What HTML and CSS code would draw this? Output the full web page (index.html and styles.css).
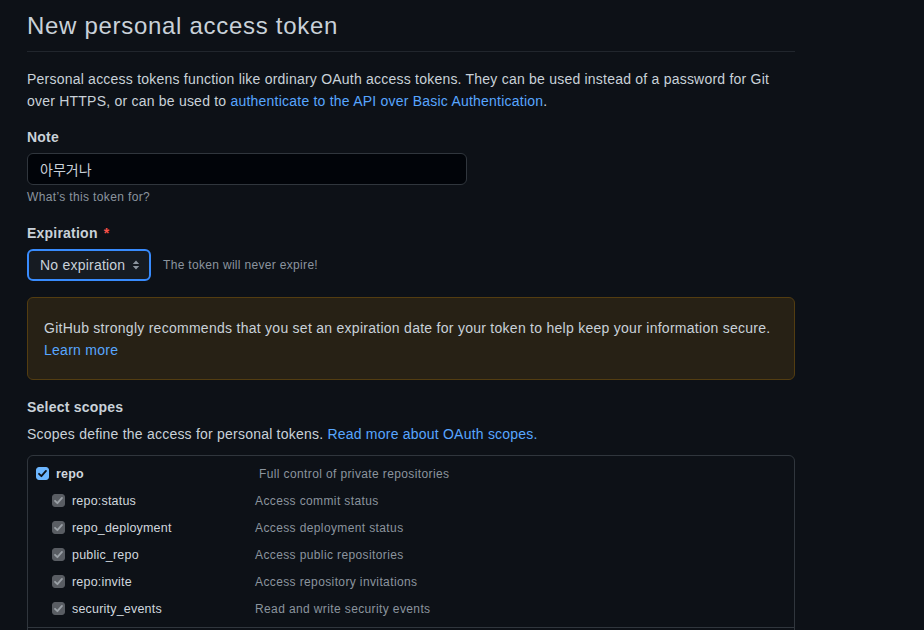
FILE: index.html
```html
<!DOCTYPE html>
<html lang="en">
<head>
<meta charset="utf-8">
<title>New personal access token</title>
<link rel="stylesheet" href="styles.css">
</head>
<body>
<div class="main">
  <h2 class="title">New personal access token</h2>
  <p class="intro">Personal access tokens function like ordinary OAuth access tokens. They can be used instead of a password for Git over HTTPS, or can be used to <a href="#">authenticate to the API over Basic Authentication</a>.</p>

  <div class="field">
    <label class="label">Note</label>
    <div class="input">아무거나</div>
    <div class="hint">What’s this token for?</div>
  </div>

  <div class="field">
    <label class="label">Expiration <span class="req">*</span></label>
    <div class="select-row">
      <div class="select">
        <span>No expiration</span>
        <svg class="arrows" width="8" height="12" viewBox="0 0 8 12"><path d="M4 1.5 L7.2 5 H0.8 Z M4 10.5 L0.8 7 H7.2 Z" fill="#8b949e"/></svg>
      </div>
      <span class="select-note">The token will never expire!</span>
    </div>
  </div>

  <div class="flash">GitHub strongly recommends that you set an expiration date for your token to help keep your information secure.<br><a href="#">Learn more</a></div>

  <div class="label scopes-title">Select scopes</div>
  <p class="scopes-desc">Scopes define the access for personal tokens. <a href="#">Read more about OAuth scopes.</a></p>

  <div class="scopes">
    <div class="group">
      <div class="row parent">
        <div class="name">
          <span class="cb cb-on"><svg width="11" height="11" viewBox="0 0 12 12"><path d="M2.2 6.3 L4.8 8.9 L9.8 3.2" fill="none" stroke="#0d1117" stroke-width="2" stroke-linecap="round" stroke-linejoin="round"/></svg></span>
          <span class="scope-label">repo</span>
        </div>
        <span class="desc">Full control of private repositories</span>
      </div>
      <div class="row child">
        <div class="name"><span class="cb cb-dis"><svg width="11" height="11" viewBox="0 0 12 12"><path d="M2.2 6.3 L4.8 8.9 L9.8 3.2" fill="none" stroke="#9aa0a6" stroke-width="2" stroke-linecap="round" stroke-linejoin="round"/></svg></span><span class="scope-label">repo:status</span></div>
        <span class="desc">Access commit status</span>
      </div>
      <div class="row child">
        <div class="name"><span class="cb cb-dis"><svg width="11" height="11" viewBox="0 0 12 12"><path d="M2.2 6.3 L4.8 8.9 L9.8 3.2" fill="none" stroke="#9aa0a6" stroke-width="2" stroke-linecap="round" stroke-linejoin="round"/></svg></span><span class="scope-label">repo_deployment</span></div>
        <span class="desc">Access deployment status</span>
      </div>
      <div class="row child">
        <div class="name"><span class="cb cb-dis"><svg width="11" height="11" viewBox="0 0 12 12"><path d="M2.2 6.3 L4.8 8.9 L9.8 3.2" fill="none" stroke="#9aa0a6" stroke-width="2" stroke-linecap="round" stroke-linejoin="round"/></svg></span><span class="scope-label">public_repo</span></div>
        <span class="desc">Access public repositories</span>
      </div>
      <div class="row child">
        <div class="name"><span class="cb cb-dis"><svg width="11" height="11" viewBox="0 0 12 12"><path d="M2.2 6.3 L4.8 8.9 L9.8 3.2" fill="none" stroke="#9aa0a6" stroke-width="2" stroke-linecap="round" stroke-linejoin="round"/></svg></span><span class="scope-label">repo:invite</span></div>
        <span class="desc">Access repository invitations</span>
      </div>
      <div class="row child">
        <div class="name"><span class="cb cb-dis"><svg width="11" height="11" viewBox="0 0 12 12"><path d="M2.2 6.3 L4.8 8.9 L9.8 3.2" fill="none" stroke="#9aa0a6" stroke-width="2" stroke-linecap="round" stroke-linejoin="round"/></svg></span><span class="scope-label">security_events</span></div>
        <span class="desc">Read and write security events</span>
      </div>
    </div>
    <div class="group next"></div>
  </div>
</div>
</body>
</html>
```

FILE: styles.css
```css
html, body {
  margin: 0;
  padding: 0;
  background: #0d1117;
  height: 630px;
  overflow: hidden;
}
body {
  font-family: "Liberation Sans", Arial, "Noto Sans CJK KR", sans-serif;
  color: #c9d1d9;
  font-size: 14px;
  letter-spacing: 0.22px;
}
a {
  color: #58a6ff;
  text-decoration: none;
}
.main {
  width: 768px;
  padding: 11px 27px 0;
}
.title {
  margin: 0;
  font-size: 24px;
  font-weight: 400;
  line-height: 30px;
  letter-spacing: 0.7px;
  padding-bottom: 10px;
  border-bottom: 1px solid #21262d;
}
.intro {
  margin: 16px 0 0;
  line-height: 22px;
}
.field {
  margin-top: 14px;
}
.field + .field {
  margin-top: 16px;
}
.label {
  display: block;
  font-weight: 700;
  line-height: 22px;
}
.req {
  color: #f85149;
  margin-left: 2px;
}
.input {
  margin-top: 5px;
  width: 440px;
  height: 32px;
  box-sizing: border-box;
  border: 1px solid #30363d;
  border-radius: 6px;
  background: #010409;
  padding: 0 12px;
  display: flex;
  align-items: center;
  font-family: "Liberation Sans", "Noto Sans CJK KR", sans-serif;
  letter-spacing: 0;
}
.hint {
  margin-top: 3px;
  font-size: 12px;
  line-height: 18px;
  letter-spacing: 0.36px;
  color: #8b949e;
}
.select-row {
  margin-top: 5px;
  display: flex;
  align-items: center;
  gap: 12px;
}
.select {
  width: 124px;
  height: 32px;
  box-sizing: border-box;
  border: 2px solid #388bfd;
  border-radius: 6px;
  background: #161b22;
  padding: 0 9px 0 11px;
  display: flex;
  align-items: center;
  justify-content: space-between;
}
.select-note {
  font-size: 12px;
  letter-spacing: 0.32px;
  color: #8b949e;
}
.flash {
  margin-top: 16px;
  background: #272115;
  border: 1px solid #533d11;
  border-radius: 6px;
  padding: 19px 16px 18px;
  line-height: 22px;
  letter-spacing: 0.27px;
}
.scopes-title {
  margin-top: 16px;
}
.scopes-desc {
  margin: 5px 0 0;
  line-height: 22px;
}
.scopes {
  margin-top: 10px;
  border: 1px solid #30363d;
  border-radius: 6px;
}
.group {
  padding: 4px 0 5px;
}
.group.next {
  border-top: 1px solid #30363d;
  height: 20px;
}
.row {
  display: flex;
  align-items: center;
  height: 27px;
  font-size: 12px;
  letter-spacing: 0.38px;
}
.scope-label {
  font-size: 12.5px;
  letter-spacing: 0.2px;
  color: #d0d7de;
}
.name {
  display: flex;
  align-items: center;
  gap: 7px;
}
.parent {
  padding-left: 8px;
}
.parent .name {
  width: 223px;
}
.parent .scope-label {
  font-weight: 700;
}
.child {
  padding-left: 24px;
}
.child .name {
  width: 203px;
}
.cb {
  width: 13px;
  height: 13px;
  box-sizing: border-box;
  border-radius: 3px;
  border: 1px solid #6e7681;
  display: flex;
  align-items: center;
  justify-content: center;
  flex: none;
}
.cb-on {
  background: #6cb6ff;
  border-color: #6cb6ff;
}
.cb-dis {
  background: #595d63;
  border-color: #595d63;
}
.desc {
  font-size: 12px;
  color: #8b949e;
}
```
